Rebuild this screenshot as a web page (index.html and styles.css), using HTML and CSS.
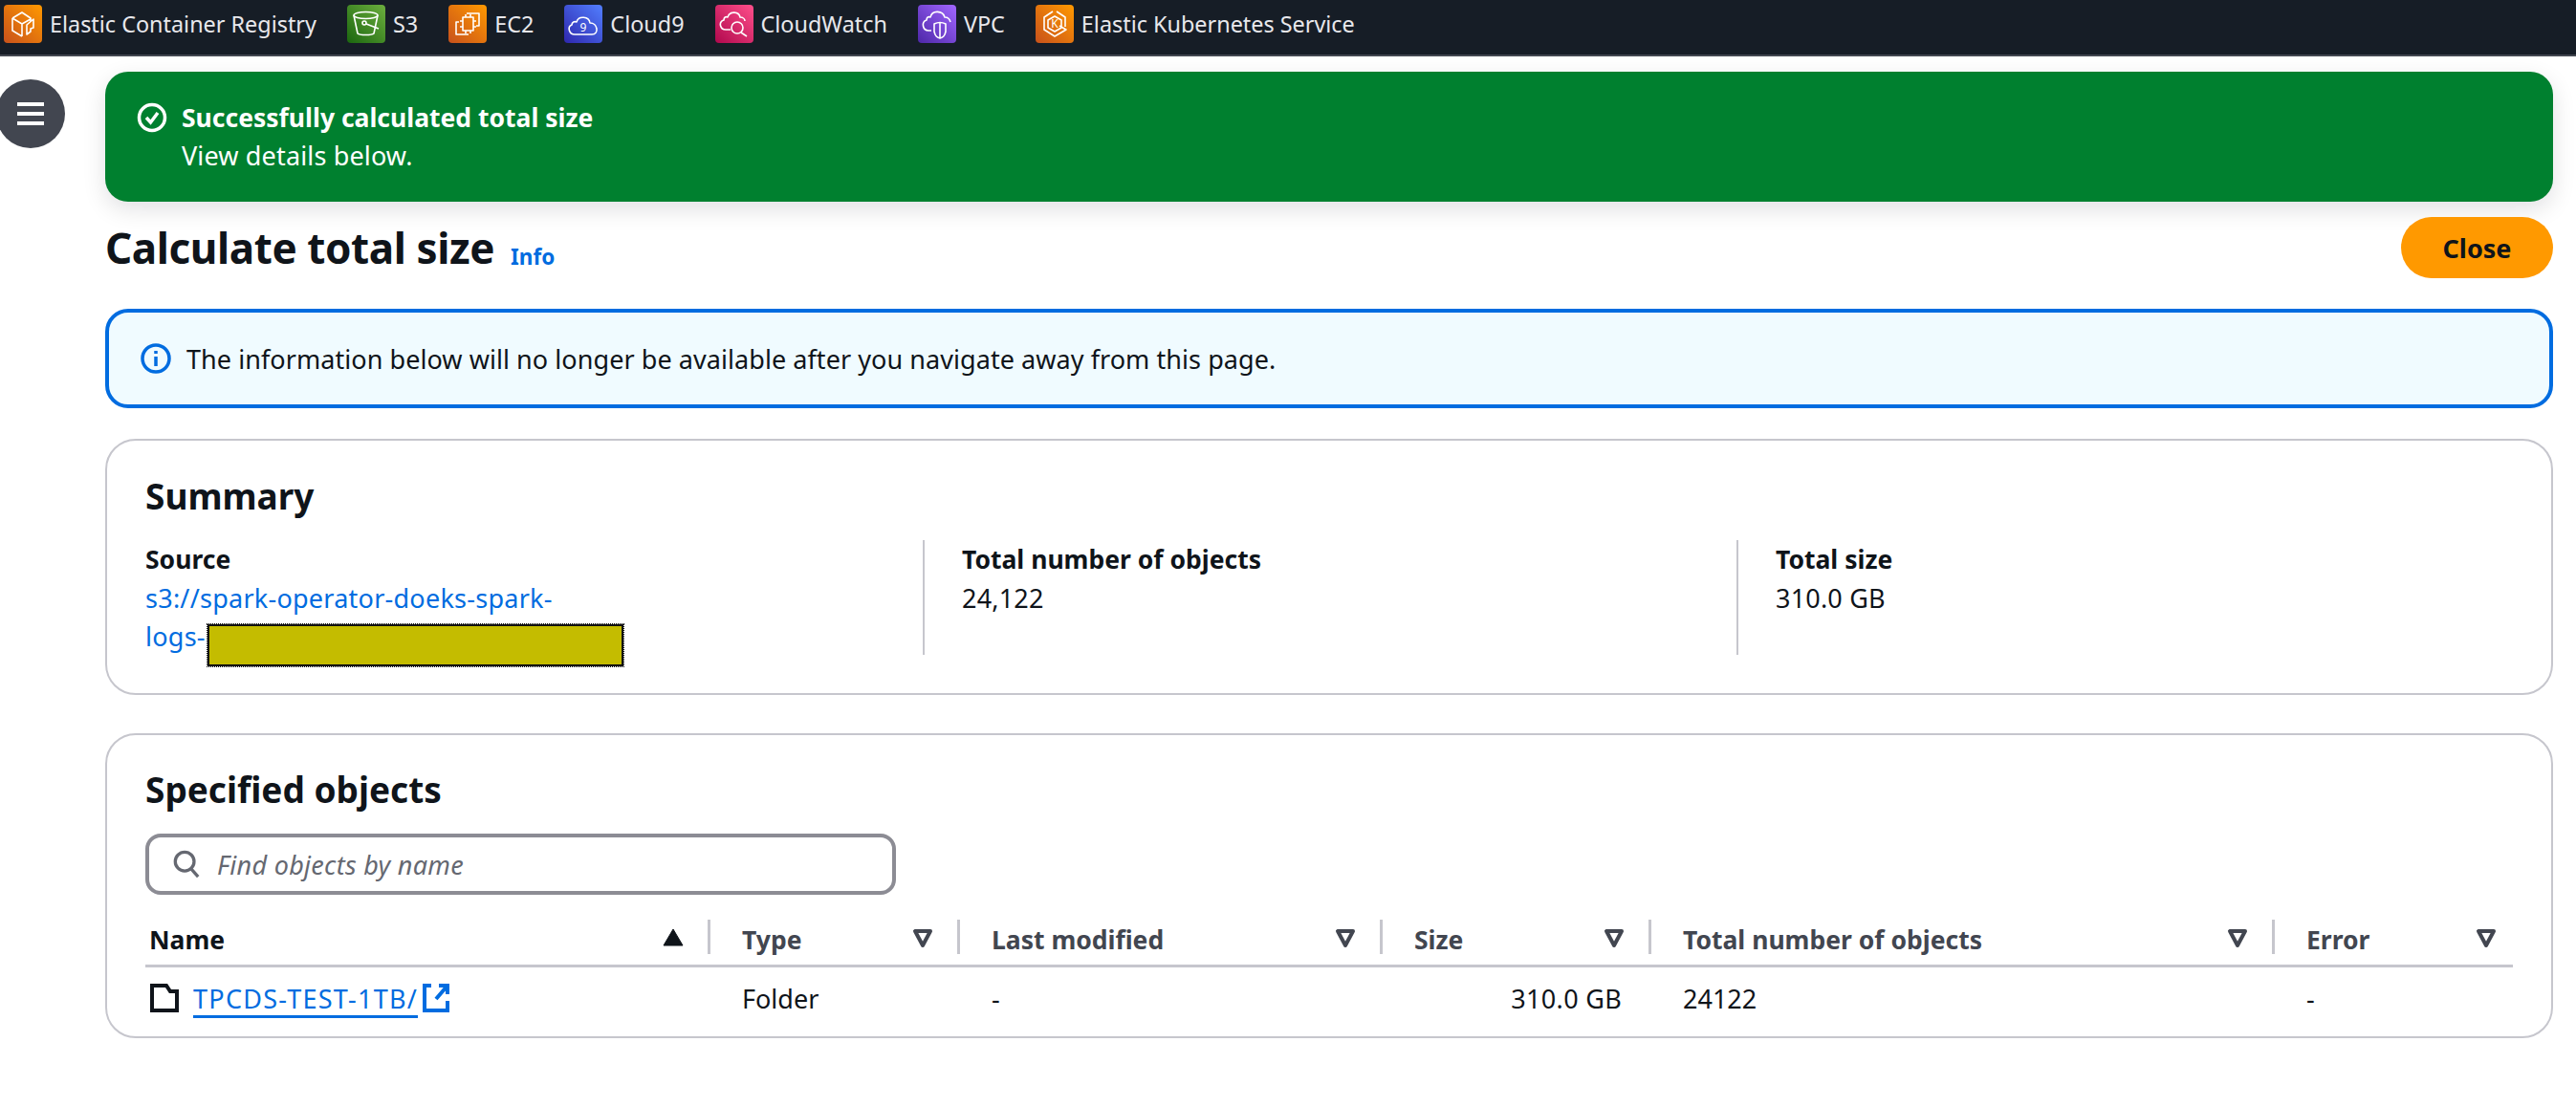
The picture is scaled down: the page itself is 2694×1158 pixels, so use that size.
FILE: index.html
```html
<!DOCTYPE html>
<html>
	<head>
		<meta charset="UTF-8" />
		<title>Calculate total size</title>
		<link rel="stylesheet" href="styles.css">
	</head>
	<body>
		<nav class="favorites">
			<a class="fav">
				<svg class="svc svc-orange" viewBox="0 0 40 40"><path d="M9 14l10-6 9 6v4M9 14v13l10 6M9 14l10 6v13M19 20l9-5"/><path d="M24 31V21l7-6v9l-3 1v3l-4 3z"/></svg>
				<span>Elastic Container Registry</span>
			</a>
			<a class="fav">
				<svg class="svc svc-green" viewBox="0 0 40 40"><ellipse cx="19.500" cy="11" rx="12.500" ry="3.500"/><path d="M7 11l4 19c2 2 15 2 17 0l4-19"/><circle cx="18" cy="19" r="2"/><path d="M20 20l13 5"/></svg>
				<span>S3</span>
			</a>
			<a class="fav">
				<svg class="svc svc-orange" viewBox="0 0 40 40"><path d="M19 9h13v13h-3M21 31H8V18h3"/><rect x="15" y="13" width="11" height="14"/><path d="M18 13v-3M23 13v-3M18 30v-3M23 30v-3M12 17h3M12 23h3M26 17h3M26 23h3"/></svg>
				<span>EC2</span>
			</a>
			<a class="fav">
				<svg class="svc svc-blue" viewBox="0 0 40 40"><path d="M11 31c-6 0-8-8-3-10 0-3 3-4 5-3 2-7 13-6 14 1 8 0 10 12 2 12z"/><text x="20" y="28" class="svc-letter">9</text></svg>
				<span>Cloud9</span>
			</a>
			<a class="fav">
				<svg class="svc svc-pink" viewBox="0 0 40 40"><path d="M16 26h-5c-6 0-8-8-2-10 0-3 2-4 4-3 2-7 12-6 13 0 3 0 5 2 5 4"/><circle cx="23" cy="24" r="6"/><path d="M27 29l6 4"/></svg>
				<span>CloudWatch</span>
			</a>
			<a class="fav">
				<svg class="svc svc-purple" viewBox="0 0 40 40"><path d="M14 27h-3c-6 0-8-9-2-11 0-3 2-4 4-3 2-8 13-7 15 0 2 0 5 1 6 5"/><path d="M17 20c4-2 8-2 12 0v8c-1 5-3 6-6 7-3-1-5-2-6-7z"/><path d="M23 19v16"/></svg>
				<span>VPC</span>
			</a>
			<a class="fav">
				<svg class="svc svc-orange" viewBox="0 0 40 40"><path d="M18 7l-9 6v13l11 7 12-7-7-4M22 7l9 6v10"/><path d="M20 12l7 4v8l-7 4-7-4v-8z"/><text x="20" y="24" class="svc-letter">K</text></svg>
				<span>Elastic Kubernetes Service</span>
			</a>
		</nav>

		<button class="nav-toggle">
			<span></span>
			<span></span>
			<span></span>
		</button>

		<main class="content">
			<div class="flash">
				<svg class="flash-icon" viewBox="0 0 32 32"><circle cx="16" cy="16" r="13.500"/><path d="M10 16l4.500 5 7.500-10"/></svg>
				<div>
					<div class="flash-title">Successfully calculated total size</div>
					<div class="flash-text">View details below.</div>
				</div>
			</div>

			<header class="page-head">
				<h1>Calculate total size</h1>
				<a class="info-link">Info</a>
				<button class="btn-close">Close</button>
			</header>

			<div class="alert">
				<svg class="alert-icon" viewBox="0 0 32 32"><circle cx="16" cy="16" r="14"/><path d="M16 14v10M16 8v3"/></svg>
				<span class="alert-text">The information below will no longer be available after you navigate away from this page.</span>
			</div>

			<section class="card summary">
				<h2>Summary</h2>
				<div class="summary-cols">
					<div class="summary-col">
						<div class="label">Source</div>
						<a class="source-link">s3://spark-operator-doeks-spark-<br>logs-<span class="redacted"></span></a>
					</div>
					<div class="summary-col">
						<div class="label">Total number of objects</div>
						<div class="value">24,122</div>
					</div>
					<div class="summary-col">
						<div class="label">Total size</div>
						<div class="value">310.0 GB</div>
					</div>
				</div>
			</section>

			<section class="card objects">
				<h2>Specified objects</h2>
				<div class="search">
					<svg class="search-icon" viewBox="0 0 32 32"><circle cx="14" cy="13" r="10.500"/><path d="M21 21l8 9"/></svg>
					<span class="search-text">Find objects by name</span>
				</div>
				<table>
					<thead>
						<tr>
							<th class="col-name"><div class="th-in">Name<svg class="sort sort-active" viewBox="0 0 24 24"><path d="M12 3l10 17H2z"/></svg></div></th>
							<th class="col-type"><div class="th-in">Type<svg class="sort" viewBox="0 0 24 24"><path d="M4 5h16l-8 15z"/></svg></div></th>
							<th class="col-date"><div class="th-in">Last modified<svg class="sort" viewBox="0 0 24 24"><path d="M4 5h16l-8 15z"/></svg></div></th>
							<th class="col-size"><div class="th-in">Size<svg class="sort" viewBox="0 0 24 24"><path d="M4 5h16l-8 15z"/></svg></div></th>
							<th class="col-total"><div class="th-in">Total number of objects<svg class="sort" viewBox="0 0 24 24"><path d="M4 5h16l-8 15z"/></svg></div></th>
							<th class="col-error"><div class="th-in">Error<svg class="sort" viewBox="0 0 24 24"><path d="M4 5h16l-8 15z"/></svg></div></th>
						</tr>
					</thead>
					<tbody>
						<tr>
							<td class="name-cell">
								<svg class="folder" viewBox="0 0 30 32"><path d="M2 3h15l4 6h7v20H2z"/></svg>
								<a class="object-link">TPCDS-TEST-1TB/</a>
								<svg class="external" viewBox="0 0 30 32"><path d="M10 3H3v26h24V19"/><path d="M18 3h9v9M27 3L15 17"/></svg>
							</td>
							<td>Folder</td>
							<td>-</td>
							<td class="num">310.0 GB</td>
							<td>24122</td>
							<td>-</td>
						</tr>
					</tbody>
				</table>
			</section>
		</main>
	</body>
</html>
```

FILE: styles.css
```css
* {
	margin: 0;
	padding: 0;
	box-sizing: border-box;
}

body {
	background: #fff;
	color: #0f141a;
	font-family: "Noto Sans", "Open Sans", sans-serif;
	font-size: 27px;
	line-height: 40px;
	overflow-x: hidden;
}

/* top favorites bar */
.favorites {
	display: flex;
	align-items: flex-start;
	gap: 32px;
	height: 59px;
	padding: 5px 0 0 4px;
	background: #161d26;
	border-bottom: 2px solid #424650;
	color: #e8e8ec;
	font-size: 23.400px;
}

.fav {
	display: flex;
	align-items: center;
	gap: 8px;
	height: 40px;
}

.svc {
	width: 40px;
	height: 40px;
	border-radius: 4px;
	fill: none;
	stroke: #fff;
	stroke-width: 1.600;
	stroke-linejoin: round;
}

.svc-orange { background: linear-gradient(45deg, #c8511b, #ff9900); }
.svc-green { background: linear-gradient(45deg, #1b660f, #6cae3e); }
.svc-blue { background: linear-gradient(45deg, #2e27ad, #527fff); }
.svc-pink { background: linear-gradient(45deg, #b0084d, #ff4f8b); }
.svc-purple { background: linear-gradient(45deg, #4d27a8, #a166ff); }

.svc-letter {
	fill: #fff;
	stroke: none;
	font-size: 12px;
	text-anchor: middle;
}

.nav-toggle {
	position: absolute;
	left: -4px;
	top: 83px;
	width: 72px;
	height: 72px;
	border: 0;
	border-radius: 50%;
	background: #424650;
	display: flex;
	flex-direction: column;
	align-items: center;
	justify-content: center;
	gap: 6px;
}

.nav-toggle span {
	display: block;
	width: 28px;
	height: 4px;
	background: #fff;
}

.content {
	display: flex;
	flex-direction: column;
	padding: 16px 24px 0 110px;
}

/* success flash */
.flash {
	display: flex;
	gap: 15px;
	height: 136px;
	padding: 28px 33px;
	background: #00802f;
	border-radius: 24px;
	box-shadow: 0 8px 24px rgba(0, 7, 22, .12);
	color: #fff;
}

.flash-icon {
	flex: none;
	width: 32px;
	height: 32px;
	margin-top: 4px;
	fill: none;
	stroke: #fff;
	stroke-width: 3.500;
}

.flash-title {
	font-size: 26.500px;
	font-weight: 700;
}

.flash-text {
	letter-spacing: .15px;
}

.page-head {
	display: flex;
	align-items: flex-start;
	margin-top: 16px;
	height: 64px;
}

h1 {
	margin-top: 4px;
	font-size: 44px;
	line-height: 56px;
	font-weight: 700;
	letter-spacing: -.4px;
}

.info-link {
	margin: 22px 0 0 17px;
	font-size: 22.500px;
	font-weight: 700;
}

.btn-close {
	margin-left: auto;
	width: 159px;
	height: 64px;
	border: 0;
	border-radius: 32px;
	background: #ff9900;
	color: #0f141a;
	font: 700 27px "Noto Sans", sans-serif;
}

/* info alert */
.alert {
	display: flex;
	align-items: center;
	gap: 16px;
	height: 104px;
	margin-top: 32px;
	padding-left: 33px;
	background: #f0fbff;
	border: 4px solid #006ce0;
	border-radius: 24px;
}

.alert-icon {
	flex: none;
	width: 32px;
	height: 32px;
	fill: none;
	stroke: #006ce0;
	stroke-width: 3.500;
}

.alert-text {
	padding-top: 2px;
	letter-spacing: .06px;
}

/* cards */
.card {
	border: 2px solid #c6c6cd;
	border-radius: 32px;
	padding: 0 40px;
}

h2 {
	font-size: 37px;
	line-height: 48px;
	font-weight: 700;
}

.summary {
	height: 268px;
	margin-top: 32px;
	padding-top: 34px;
}

.summary-cols {
	display: grid;
	grid-template-columns: 813px 851px 1fr;
	margin-top: 22px;
}

.summary-col {
	height: 120px;
	padding-left: 39px;
	border-left: 2px solid #c6c6cd;
}

.summary-col:first-child {
	padding-left: 0;
	border-left: 0;
}

.label {
	font-size: 26.500px;
	font-weight: 700;
}

.value {
	margin-top: 1px;
	letter-spacing: .2px;
}

.source-link,
.object-link,
.info-link {
	color: #006ce0;
}

.source-link {
	display: block;
	margin-top: 1px;
	letter-spacing: .25px;
}

.redacted {
	display: inline-block;
	width: 435px;
	height: 44px;
	margin: 7px 0 -11px 2px;
	vertical-align: top;
	background: #c4bc00;
	border: 2px solid #111;
	outline: 1px dotted #111;
}

.objects {
	height: 319px;
	margin-top: 40px;
	padding-top: 33px;
}

.search {
	display: flex;
	align-items: center;
	gap: 17px;
	width: 785px;
	height: 64px;
	margin-top: 22px;
	padding-left: 24px;
	border: 4px solid #8c8c94;
	border-radius: 16px;
	color: #656871;
	font-style: italic;
	letter-spacing: .3px;
}

.search-icon {
	flex: none;
	width: 30px;
	height: 30px;
	fill: none;
	stroke: #656871;
	stroke-width: 3.500;
}

.search-text {
	padding-top: 2px;
}

/* objects table */
table {
	width: 2476px;
	margin-top: 26px;
	border-collapse: collapse;
	table-layout: fixed;
}

th {
	height: 47px;
	padding: 0 0 11px;
	border-bottom: 3px solid #c6c6cd;
	color: #424650;
	font-size: 26.500px;
	font-weight: 700;
	text-align: left;
}

th.col-name { width: 591px; color: #0f141a; }
th.col-type { width: 261px; }
th.col-date { width: 442px; }
th.col-size { width: 281px; }
th.col-total { width: 652px; }

.th-in {
	display: flex;
	align-items: center;
	justify-content: space-between;
	height: 36px;
	padding: 6px 24px 0 33px;
	border-right: 3px solid #c6c6cd;
}

.col-name .th-in { padding-left: 4px; }
.col-error .th-in { border-right: 0; padding-right: 16px; }

.sort {
	flex: none;
	width: 24px;
	height: 24px;
	margin-top: -4px;
	fill: none;
	stroke: #424650;
	stroke-width: 4;
	stroke-linejoin: round;
}

.sort-active {
	fill: #0f141a;
	stroke: #0f141a;
	stroke-width: 1;
}

td {
	height: 68px;
	padding: 0 0 2px 33px;
	vertical-align: middle;
}

td.num {
	padding-right: 31px;
	text-align: right;
	letter-spacing: .3px;
}

.name-cell {
	display: flex;
	align-items: center;
	height: 68px;
	padding-left: 5px;
}

.folder {
	flex: none;
	width: 30px;
	height: 32px;
	margin: -2px 15px 0 0;
	fill: none;
	stroke: #0f141a;
	stroke-width: 4;
}

.object-link {
	border-bottom: 3px solid #006ce0;
	line-height: 34px;
	margin-top: 2px;
	letter-spacing: 1.270px;
}

.external {
	flex: none;
	width: 30px;
	height: 32px;
	margin: -2px 0 0 4px;
	fill: none;
	stroke: #006ce0;
	stroke-width: 4;
}
```
